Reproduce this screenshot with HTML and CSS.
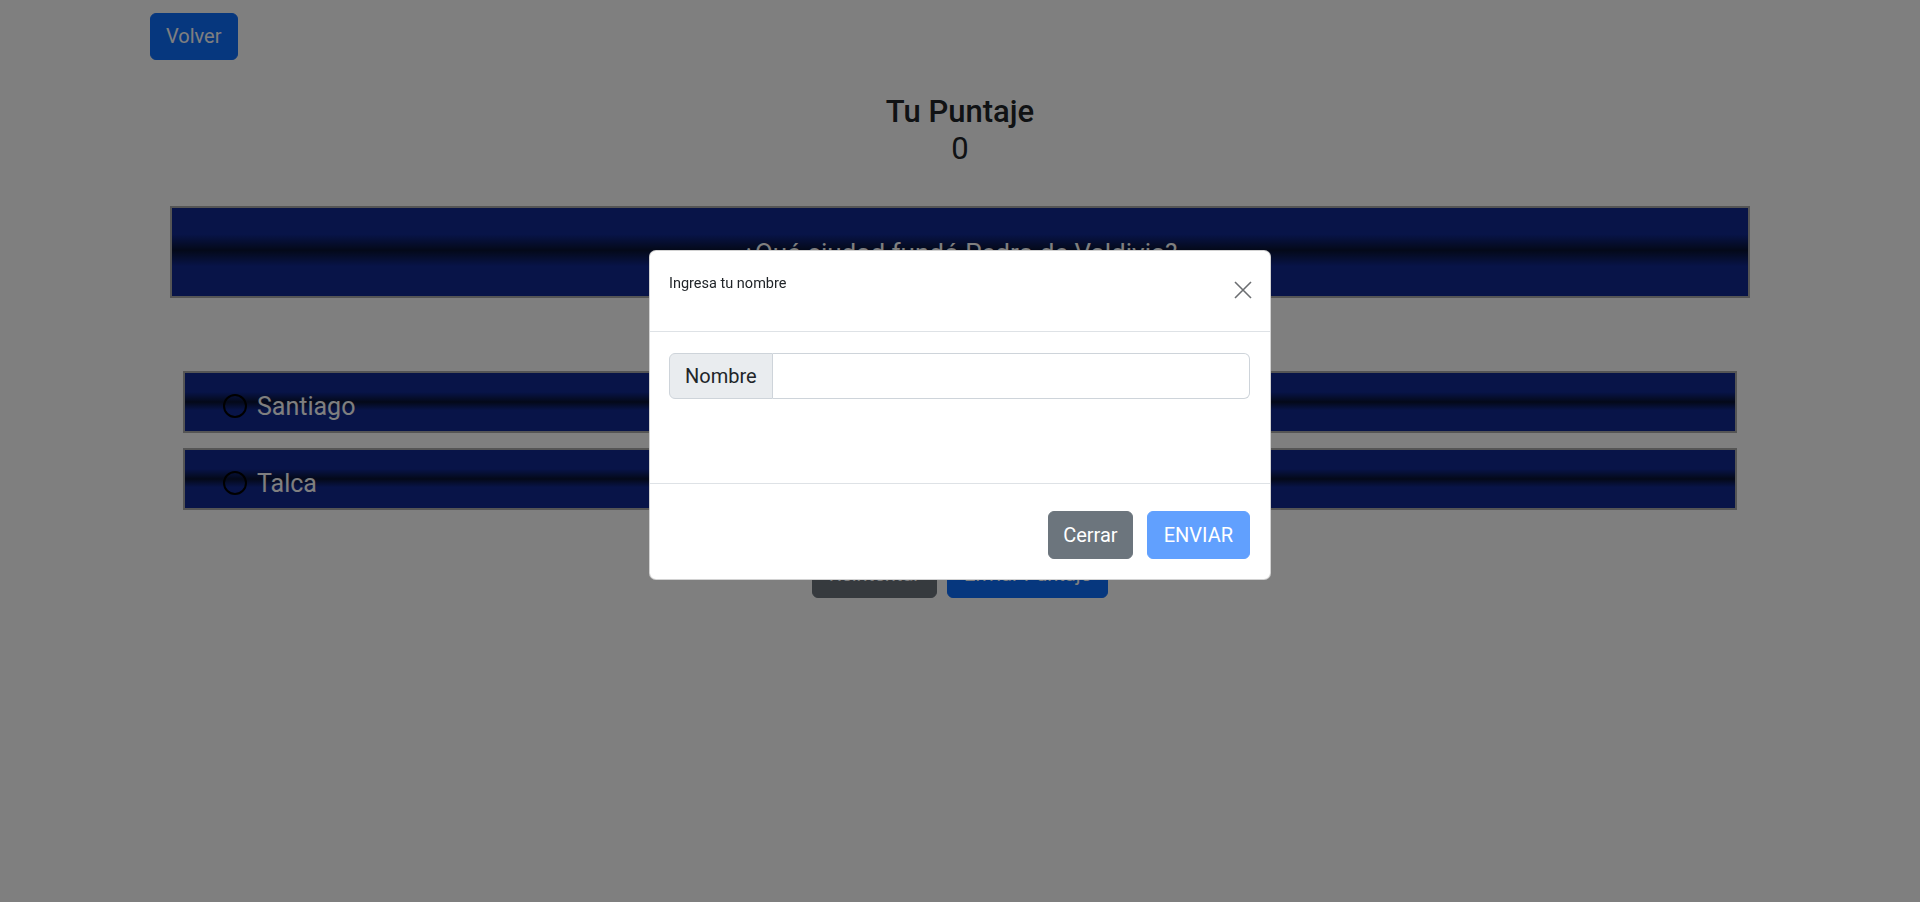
FILE: index.html
```html
<!DOCTYPE html>
<html lang="es">
<head>
<meta charset="utf-8">
<title>Quiz</title>
<link rel="stylesheet" href="styles.css">
</head>
<body>
<div class="page">
  <div class="topbar">
    <button class="btn btn-lg btn-primary btn-back">Volver</button>
  </div>
  <div class="score">
    <h3 class="score-title">Tu Puntaje</h3>
    <div class="score-value">0</div>
  </div>
  <div class="question">¿Qué ciudad fundó Pedro de Valdivia?</div>
  <div class="options">
    <label class="option"><span class="radio"></span><span class="option-text">Santiago</span></label>
    <label class="option"><span class="radio"></span><span class="option-text">Talca</span></label>
  </div>
  <div class="actions">
    <button class="btn btn-lg btn-secondary">Reintentar</button>
    <button class="btn btn-lg btn-primary">Enviar Puntaje</button>
  </div>
</div>

<div class="backdrop"></div>
<div class="modal">
  <div class="modal-content">
    <div class="modal-header">
      <div class="modal-title">Ingresa tu nombre</div>
      <button class="btn-close" aria-label="Close">
        <svg width="18" height="18" viewBox="0 0 18 18"><path d="M1 1L17 17M17 1L1 17" stroke="#6b6e71" stroke-width="1.6" fill="none"/></svg>
      </button>
    </div>
    <div class="modal-body">
      <div class="input-group">
        <span class="input-addon">Nombre</span>
        <input class="input" type="text">
      </div>
    </div>
    <div class="modal-footer">
      <button class="btn btn-lg btn-secondary btn-close-modal">Cerrar</button>
      <button class="btn btn-lg btn-primary disabled">ENVIAR</button>
    </div>
  </div>
</div>
</body>
</html>
```

FILE: styles.css
```css
* { box-sizing: border-box; }
html, body { margin: 0; padding: 0; }
body {
  font-family: Roboto, "Liberation Sans", sans-serif;
  color: #212529;
  background: #fff;
  width: 1920px;
  height: 902px;
  overflow: hidden;
}
.btn {
  font-family: inherit;
  display: inline-block;
  border: 1px solid transparent;
  color: #fff;
  cursor: pointer;
}
.btn-lg {
  font-size: 20px;
  line-height: 30px;
  padding: 8px 16px;
  border-radius: 6px;
}
.btn-primary { background: #0d6efd; border-color: #0d6efd; }
.btn-secondary { background: #6c757d; border-color: #6c757d; }
.btn-primary.disabled { background: #0d6efd; opacity: .65; }
.btn-back { padding: 8px 15px; line-height: 29px; }

.topbar { padding: 13px 0 0 150px; }

.score { text-align: center; margin-top: 33px; }
.score-title {
  margin: 0;
  font-size: 31px;
  line-height: 37px;
  font-weight: 500;
}
.score-value {
  font-size: 31px;
  line-height: 37px;
  font-weight: 400;
}

.question {
  margin: 39px 170px 0;
  height: 92px;
  border: 2px solid #aaa;
  background: linear-gradient(to bottom, #102890 0%, #102890 30%, #081232 48%, #102890 66%, #102890 100%);
  color: #fff;
  font-size: 26px;
  display: flex;
  align-items: center;
  justify-content: center;
  padding-top: 2px;
}

.options {
  margin: 73px 183px 0;
  display: flex;
  flex-direction: column;
  gap: 15px;
}
.option {
  height: 62px;
  border: 2px solid #aaa;
  background: linear-gradient(to bottom, #102890 0%, #102890 33%, #081232 50%, #102890 64%, #102890 100%);
  display: flex;
  align-items: center;
  padding: 8px 0 0 38px;
  gap: 10px;
  color: #fff;
  font-size: 25px;
}
.radio {
  width: 24px;
  height: 24px;
  border: 2px solid #000;
  border-radius: 50%;
}

.actions {
  margin-top: 40px;
  display: flex;
  justify-content: center;
  gap: 10px;
}

.backdrop {
  position: fixed;
  inset: 0;
  background: rgba(0, 0, 0, .5);
}
.modal {
  position: fixed;
  inset: 0;
  display: flex;
  justify-content: center;
  align-items: flex-start;
  padding-top: 250px;
}
.modal-content {
  width: 622px;
  background: #fff;
  border: 1px solid rgba(0, 0, 0, .175);
  border-radius: 7px;
}
.modal-header {
  height: 81px;
  border-bottom: 1px solid #dee2e6;
  display: flex;
  justify-content: space-between;
  align-items: flex-start;
  padding: 0 18px 0 19px;
}
.modal-title {
  margin-top: 22px;
  font-size: 14.5px;
  line-height: 22px;
  color: #212529;
}
.btn-close {
  margin-top: 30px;
  width: 18px;
  height: 18px;
  padding: 0;
  border: 0;
  background: transparent;
  display: block;
}
.btn-close svg { display: block; }
.modal-body {
  height: 151px;
  padding: 21px 20px 0 19px;
}
.input-group { display: flex; height: 46px; }
.input-addon {
  display: flex;
  align-items: center;
  padding: 0 15px;
  font-size: 20px;
  background: #e9ecef;
  border: 1px solid #ced4da;
  border-radius: 6px 0 0 6px;
  color: #212529;
}
.input {
  flex: 1;
  border: 1px solid #ced4da;
  border-left: 0;
  border-radius: 0 6px 6px 0;
  font-size: 20px;
  font-family: inherit;
  padding: 8px 16px;
  outline: none;
}
.modal-footer {
  border-top: 1px solid #dee2e6;
  padding: 27px 20px 20px;
  display: flex;
  justify-content: flex-end;
  gap: 14px;
}
.btn-close-modal { padding: 8px 14px; }
```
